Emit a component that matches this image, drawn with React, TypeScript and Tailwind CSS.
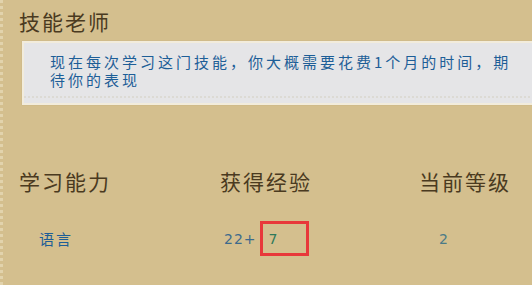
export default function App() {
  const font = { fontFamily: '"Noto Sans CJK SC", "Liberation Sans", sans-serif' };
  const num = { fontFamily: '"DejaVu Sans", sans-serif' };
  return (
    <div
      className="relative h-[285px] w-[532px] overflow-hidden bg-[#d4bf8e]"
      style={font}
    >
      {/* dotted left edge */}
      <div className="absolute left-0 top-0 h-full w-[4px] border-l-[3px] border-dotted border-[#e2d3ac]" />

      <h1 className="pl-[19px] pt-[7px] text-[21px] leading-[28px] tracking-[2px] text-[#4a3a1f]">
        技能老师
      </h1>

      {/* notice box */}
      <div className="-mr-6 ml-[22px] mt-[6px] h-[64px] border-2 border-[#f2ecdc] bg-[#e5e5e7] shadow-[0_0_1px_#bfa979]">
        <p className="pl-[26px] pt-[10px] text-[15px] leading-[18px] tracking-[3px] text-[#1d5e97]">
          现在每次学习这门技能，你大概需要花费1个月的时间，期
          <br />
          待你的表现
        </p>
        <div className="mt-[7px] border-b-2 border-dotted border-[#dcdad4]" />
      </div>

      {/* stats */}
      <div className="mt-[62px] grid grid-cols-[201px_199px_1fr] pl-[19px] text-[21px] leading-[28px] tracking-[2px] text-[#4a3a1f]">
        <div>学习能力</div>
        <div>获得经验</div>
        <div>当前等级</div>
      </div>

      <div className="mt-[26px] grid grid-cols-[185px_215px_1fr] items-center pl-[39px] text-[15px] leading-[20px]">
        <div className="tracking-[2px] text-[#1d5e97]">语言</div>
        <div className="flex items-center">
          <span className="text-[14px] tracking-[1px] text-[#3c6a8c]" style={num}>
            22+
          </span>
          <span
            className="ml-[3px] flex h-[35px] w-[49px] items-center border-[3px] border-[#e8383a] pl-[6px] text-[14px] text-[#2f7a5a]"
            style={num}
          >
            7
          </span>
        </div>
        <div className="text-[14px] text-[#4b7a87]" style={num}>
          2
        </div>
      </div>
    </div>
  );
}
